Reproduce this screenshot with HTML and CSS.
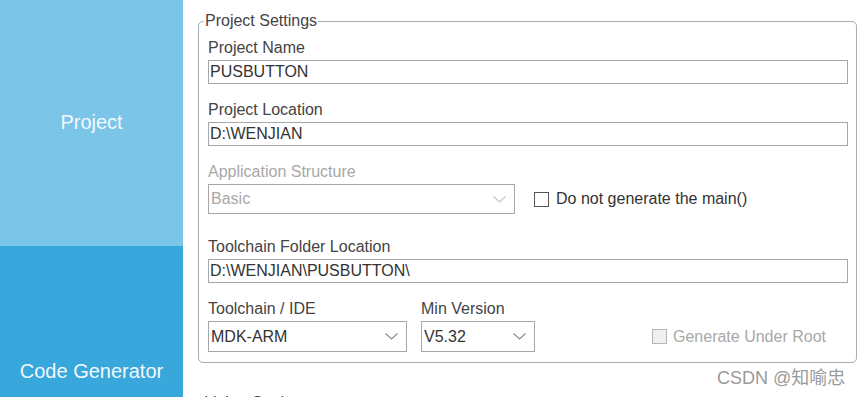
FILE: index.html
```html
<!DOCTYPE html>
<html lang="en">
<head>
    <meta charset="UTF-8">
    <meta name="viewport" content="width=device-width, initial-scale=1.0">
    <title>Project Manager</title>
    <link rel="stylesheet" href="styles.css">
</head>
<body>
    <div class="app">
        <aside class="side">
            <div class="tab tab-project">Project</div>
            <div class="tab tab-code">Code Generator</div>
        </aside>
        <main class="content">
            <fieldset class="group">
                <legend>Project Settings</legend>
                <div class="field">
                    <label>Project Name</label>
                    <div class="input">PUSBUTTON</div>
                </div>
                <div class="field">
                    <label>Project Location</label>
                    <div class="input">D:\WENJIAN</div>
                </div>
                <div class="field field-wide">
                    <label class="disabled">Application Structure</label>
                    <div class="row">
                        <div class="select select-basic disabled">
                            <span>Basic</span>
                            <svg width="13" height="7" viewBox="0 0 13 7"><polyline points="0.5,0.5 6.5,6 12.5,0.5" fill="none" stroke="#c4c4c4" stroke-width="1.2"/></svg>
                        </div>
                        <div class="check">
                            <span class="box"></span>
                            <span>Do not generate the main()</span>
                        </div>
                    </div>
                </div>
                <div class="field">
                    <label>Toolchain Folder Location</label>
                    <div class="input">D:\WENJIAN\PUSBUTTON\</div>
                </div>
                <div class="row row-last">
                    <div class="field">
                        <label>Toolchain / IDE</label>
                        <div class="select select-ide">
                            <span>MDK-ARM</span>
                            <svg width="13" height="7" viewBox="0 0 13 7"><polyline points="0.5,0.5 6.5,6 12.5,0.5" fill="none" stroke="#8c8c8c" stroke-width="1.2"/></svg>
                        </div>
                    </div>
                    <div class="field">
                        <label>Min Version</label>
                        <div class="select select-ver">
                            <span>V5.32</span>
                            <svg width="13" height="7" viewBox="0 0 13 7"><polyline points="0.5,0.5 6.5,6 12.5,0.5" fill="none" stroke="#8c8c8c" stroke-width="1.2"/></svg>
                        </div>
                    </div>
                    <div class="check check-root disabled">
                        <span class="box"></span>
                        <span>Generate Under Root</span>
                    </div>
                </div>
            </fieldset>
            <div class="next-title">Linker Settings</div>
            <div class="watermark">CSDN @知喻忠</div>
        </main>
    </div>
</body>
</html>
```

FILE: styles.css
```css
html, body{
    margin: 0;
    height: 100%;
    overflow: hidden;
    background: #fff;
}
body{
    font-family: "Liberation Sans", Arial, sans-serif;
    font-size: 16px;
    color: #3c3c3c;
}
.app{
    display: flex;
    height: 397px;
}
.side{
    width: 183px;
    flex-shrink: 0;
    display: flex;
    flex-direction: column;
}
.tab{
    height: 246px;
    flex-shrink: 0;
    box-sizing: border-box;
    color: #f2f9fd;
    font-size: 20px;
    line-height: 24px;
    text-align: center;
}
.tab-project{
    background-color: #7bc5e9;
    padding-top: 110px;
}
.tab-code{
    background-color: #38a7db;
    padding-top: 113px;
}
.content{
    position: relative;
    flex: 1;
    padding-left: 15px;
}
.group{
    width: 640px;
    margin: 12px 0 0 0;
    padding: 9px 8px 10px 9px;
    border: 1px solid #aaaeb2;
    border-radius: 5px;
}
.group legend{
    margin-left: -4px;
    padding: 0 1px;
    line-height: 18px;
    color: #444;
}
.field{
    display: flex;
    flex-direction: column;
    margin-bottom: 17px;
}
.field label{
    line-height: 18px;
    margin-bottom: 3px;
    color: #444;
}
.field label.disabled{
    color: #a8a8a8;
}
.field-wide{
    margin-bottom: 24px;
}
.input{
    height: 24px;
    box-sizing: border-box;
    border: 1px solid #a4a8ac;
    padding-left: 1px;
    line-height: 22px;
    color: #333;
    white-space: nowrap;
}
.row{
    display: flex;
    align-items: center;
}
.row-last{
    align-items: flex-end;
}
.row-last .field{
    margin-bottom: 0;
    margin-right: 14px;
}
.select{
    height: 31px;
    box-sizing: border-box;
    border: 1px solid #a4a8ac;
    padding: 0 8px 0 2px;
    display: flex;
    align-items: center;
    justify-content: space-between;
    color: #333;
}
.select.disabled{
    color: #a8a8a8;
}
.select svg{
    display: block;
}
.select-basic{
    width: 307px;
    height: 30px;
}
.select-ide{
    width: 199px;
}
.select-ver{
    width: 114px;
}
.check{
    display: flex;
    align-items: center;
    margin-left: 19px;
    color: #333;
}
.check .box{
    width: 13px;
    height: 13px;
    border: 1px solid #555;
    margin-right: 7px;
    background: #fff;
}
.check-root{
    margin-left: 103px;
    height: 31px;
    color: #a8a8a8;
}
.check-root .box{
    border-color: #b5b5b5;
    background: #eef0f2;
    margin-right: 6px;
}
.next-title{
    margin: 31px 0 0 6px;
    line-height: 18px;
    color: #444;
}
.watermark{
    position: absolute;
    left: 534px;
    top: 366px;
    font-family: "Liberation Sans", "Noto Sans CJK SC", sans-serif;
    font-size: 18px;
    line-height: 24px;
    color: #9a9a9a;
}
```
